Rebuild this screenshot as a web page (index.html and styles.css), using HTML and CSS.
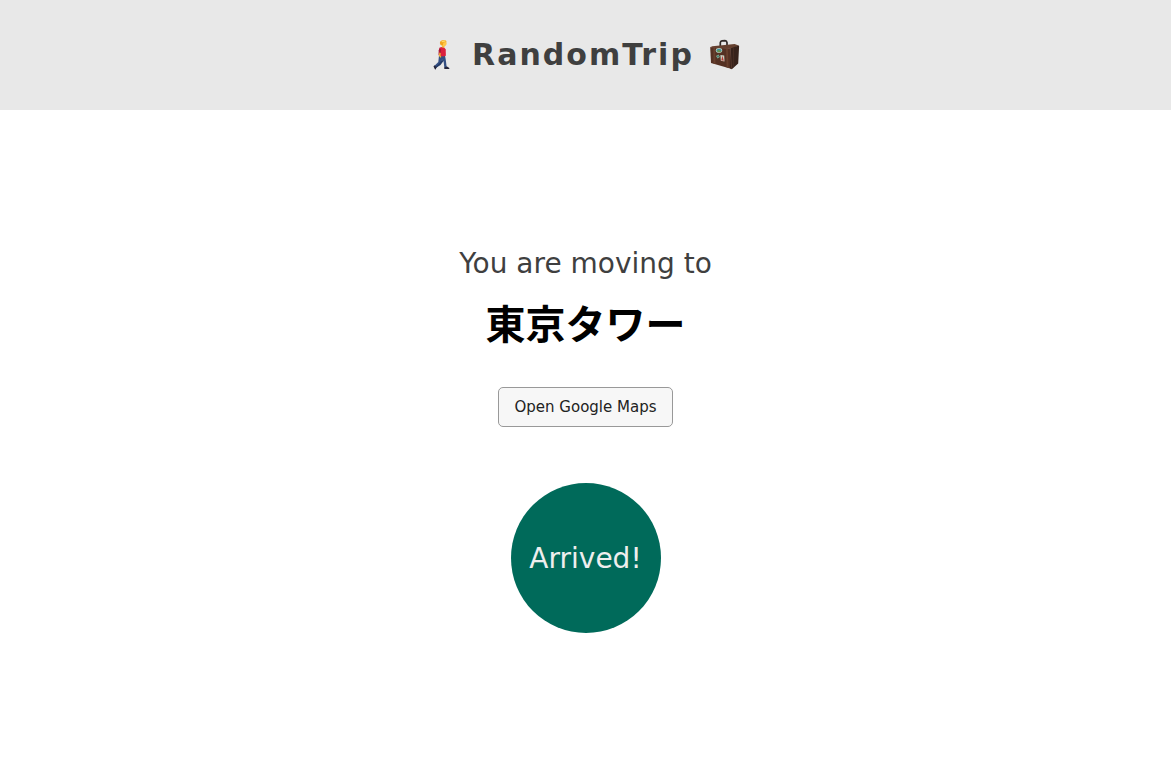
FILE: index.html
```html
<!DOCTYPE html>
<html lang="en">
<head>
<meta charset="utf-8">
<meta name="viewport" content="width=device-width, initial-scale=1">
<title>RandomTrip</title>
<link rel="stylesheet" href="styles.css">
</head>
<body>
<header class="header">
  <svg class="icon walker" viewBox="0 0 22 34" aria-hidden="true">
    <path fill="#344f83" d="M9 17.5 15 17.5 15.8 22 16.6 28.5 18.4 30 14.4 30 13.6 23.5 12 21.5 10.4 26 5.6 30.2 4 28.2 8.3 24Z"/>
    <path fill="#243b68" d="m12 21.5 1.5 1.5-3 4-5 3.2-.6-.8 4.8-4.4Z"/>
    <path fill="#25263b" d="m4.3 27.3 2.2 2-.7 2.2-.9-.3-1.4-2.7Zm10 2.3 2.7-1 2.3 1.5v1h-5Z"/>
    <path fill="#dc213e" d="m9.6 9.4 3.8-.7 2.3 2.5.2 6.5-2.7.8-4.4-.7.2-4.8Z"/>
    <path fill="#ad1737" d="m9.4 10.2 1.8 1-.7 4.5-1.9 1.3.1-4.7Z"/>
    <path fill="#f3b73c" d="m9.4 14.6 1.3.5-.2 2.4.9 1.6-1 .6-1.5-2Zm2.4-6.6 2.9-.2-.4 1.6-1.7.6Z"/>
    <circle fill="#ffc84b" cx="13.7" cy="5.3" r="2.9"/>
    <path fill="#f1a51f" d="M10.7 6.9C9 4.6 10.4 2.3 12.6 2.2l3.4.2.5 1.5-3 .5-.7 3Z"/>
    <path fill="#ffda65" d="m11.4 3 4.1-.5.2.9-3.5.8Z"/>
  </svg>
  <h1 class="title">RandomTrip</h1>
  <svg class="icon suitcase" viewBox="0 0 33 34" aria-hidden="true">
    <path fill="none" stroke="#302927" stroke-width="1.7" d="M12.3 8V4.6Q12.5 3 14 2.8l3-.1q1.8.1 2 1.9v3"/>
    <path fill="#65402f" d="m2.3 9.2 2-1 22.3-2.1 4 1.5-6.5 3.1-18.4-.2Z"/>
    <path fill="#553123" d="m2.2 9.2 20 1.2 1.6 20.6L3 25Z"/>
    <path fill="#37221b" d="m22.2 10.4 8.3-2.8q.7 0 .6 1l-.9 17-6.4 5.6-1.6-.8Z"/>
    <path fill="#68402e" d="m5.3 9.4 1.8.1.4 16.6-2-.6Zm12.7.7 1.8.1.8 19.8-1.9-.5Z"/>
    <path fill="none" stroke="#70483a" stroke-width=".5" d="m2.5 9.3 19.7 1.1 1.5 20.4"/>
    <path fill="none" stroke="#482c22" stroke-width=".9" d="m25.6 9.6-.3 19.7"/>
    <ellipse cx="11" cy="12.4" rx="3.2" ry="2.3" fill="#b9cfc3"/>
    <ellipse cx="11" cy="12.4" rx="2.5" ry="1.6" fill="#3c91a3"/>
    <path fill="#6f9445" d="m8.7 13 2-1.1 2.8 1.4-2.4 1Z"/>
    <path fill="#c8cfc1" d="m12.4 17.1 3.8.4.3 6-3.7-.8Z"/>
    <path fill="#bb3832" d="m14.4 17.8 1.4 5-2.5-.5Z"/>
    <path fill="#86aa94" d="m8 18 2.5-1.4 1.4 2.3-2.4 1.6Z"/>
    <path fill="#377768" d="m9 18.1 1.2-.6.8 1.2-1.2.8Z"/>
  </svg>
</header>
<main class="main">
  <p class="status">You are moving to</p>
  <h2 class="place" lang="ja">東京タワー</h2>
  <button class="maps" type="button">Open Google Maps</button>
  <button class="arrived" type="button">Arrived!</button>
</main>
</body>
</html>
```

FILE: styles.css
```css
* {
  box-sizing: border-box;
}

body {
  margin: 0;
  background: #fff;
  font-family: Verdana, "DejaVu Sans", "Noto Sans CJK JP", sans-serif;
}

.header {
  display: flex;
  justify-content: center;
  align-items: center;
  padding: 36px 16px;
  background: #e8e8e8;
}

.title {
  margin: 0 14px 0 20px;
  color: #3f3f3f;
  font-size: 30px;
  line-height: 38px;
  letter-spacing: 2px;
}

.icon {
  flex: none;
  height: 34px;
}

.walker {
  width: 22px;
}

.suitcase {
  width: 33px;
}

.main {
  display: flex;
  flex-direction: column;
  align-items: center;
  padding: 136px 16px 40px;
}

.status {
  margin: 0;
  color: #3f3f3f;
  font-size: 28px;
  line-height: 36px;
}

.place {
  margin: 10px 0 35px;
  color: #000;
  font-family: "Noto Sans CJK JP", sans-serif;
  font-size: 40px;
  line-height: 60px;
}

.maps {
  padding: 0 16px;
  border: 1px solid #999;
  border-radius: 5px;
  background: #f7f7f7;
  color: #222;
  font-family: inherit;
  font-size: 15px;
  line-height: 38px;
  cursor: pointer;
}

.arrived {
  width: 150px;
  height: 150px;
  margin-top: 56px;
  padding: 0;
  border: 0;
  border-radius: 50%;
  background: #006a5a;
  color: #eee;
  font-family: inherit;
  font-size: 28px;
  cursor: pointer;
}
```
